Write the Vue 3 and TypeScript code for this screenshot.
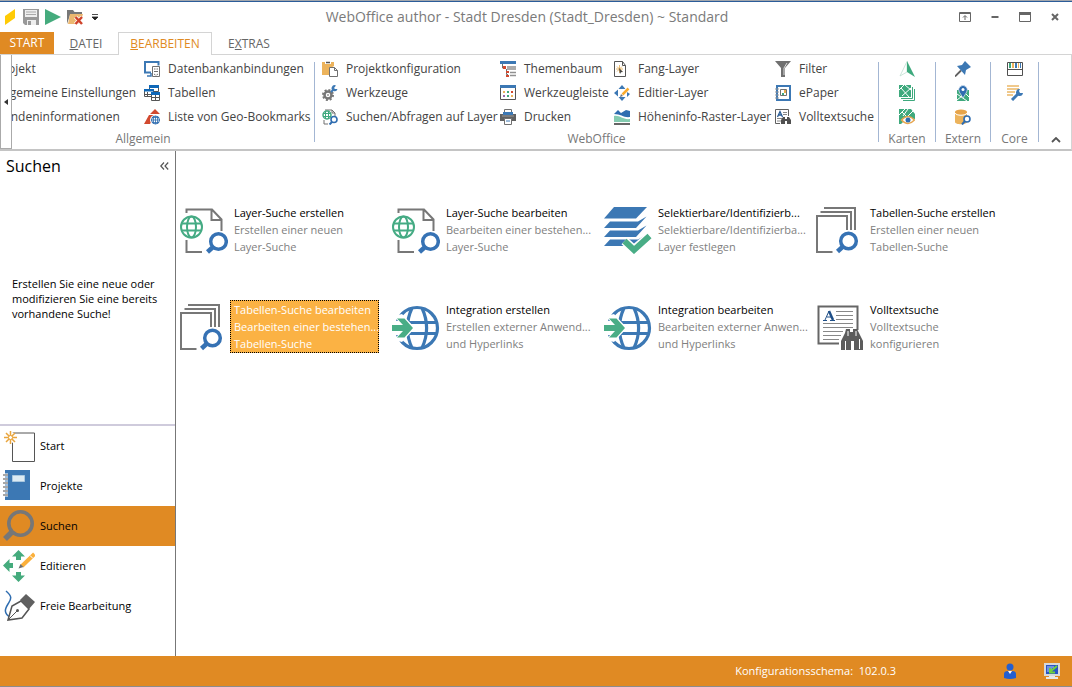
<script setup lang="ts">
import { ref } from 'vue'

interface Command {
  label: string
  icon: string
}
interface RibbonGroup {
  title: string
  kind: string
  commands: Command[]
}
interface Tile {
  title: string
  lines: string[]
  icon: string
}

const groups: RibbonGroup[] = [
  {
    title: 'Allgemein',
    kind: 'general',
    commands: [
      { label: 'Projekt', icon: '' },
      { label: 'Allgemeine Einstellungen', icon: '' },
      { label: 'Kundeninformationen', icon: '' },
      { label: 'Datenbankanbindungen', icon: 'database' },
      { label: 'Tabellen', icon: 'tables' },
      { label: 'Liste von Geo-Bookmarks', icon: 'bookmark' },
    ],
  },
  {
    title: 'WebOffice',
    kind: 'office',
    commands: [
      { label: 'Projektkonfiguration', icon: 'clipboard' },
      { label: 'Werkzeuge', icon: 'tools' },
      { label: 'Suchen/Abfragen auf Layer', icon: 'layersearch' },
      { label: 'Themenbaum', icon: 'tree' },
      { label: 'Werkzeugleiste', icon: 'toolbar' },
      { label: 'Drucken', icon: 'printer' },
      { label: 'Fang-Layer', icon: 'snap' },
      { label: 'Editier-Layer', icon: 'edit' },
      { label: 'Höheninfo-Raster-Layer', icon: 'terrain' },
      { label: 'Filter', icon: 'filter' },
      { label: 'ePaper', icon: 'epaper' },
      { label: 'Volltextsuche', icon: 'fulltext' },
    ],
  },
]

const compactGroups = [
  { title: 'Karten', kind: 'maps', icons: ['north', 'mapstack', 'mapview'] },
  { title: 'Extern', kind: 'extern', icons: ['pin', 'place', 'dbsearch'] },
  { title: 'Core', kind: 'core', icons: ['palette', 'configure'] },
]

const tiles: Tile[] = [
  { title: 'Layer-Suche erstellen', lines: ['Erstellen einer neuen', 'Layer-Suche'], icon: 't-layer' },
  { title: 'Layer-Suche bearbeiten', lines: ['Bearbeiten einer bestehen...', 'Layer-Suche'], icon: 't-layer' },
  { title: 'Selektierbare/Identifizierb...', lines: ['Selektierbare/Identifizierba...', 'Layer festlegen'], icon: 't-select' },
  { title: 'Tabellen-Suche erstellen', lines: ['Erstellen einer neuen', 'Tabellen-Suche'], icon: 't-table' },
  { title: 'Tabellen-Suche bearbeiten', lines: ['Bearbeiten einer bestehen...', 'Tabellen-Suche'], icon: 't-table' },
  { title: 'Integration erstellen', lines: ['Erstellen externer Anwend...', 'und Hyperlinks'], icon: 't-integration' },
  { title: 'Integration bearbeiten', lines: ['Bearbeiten externer Anwen...', 'und Hyperlinks'], icon: 't-integration' },
  { title: 'Volltextsuche', lines: ['Volltextsuche', 'konfigurieren'], icon: 't-fulltext' },
]

const sections = [
  { label: 'Start', icon: 'n-start' },
  { label: 'Projekte', icon: 'n-projects' },
  { label: 'Suchen', icon: 'n-search' },
  { label: 'Editieren', icon: 'n-edit' },
  { label: 'Freie Bearbeitung', icon: 'n-free' },
]

const activeTile = ref(4)
const activeSection = ref(2)
</script>

<template>
  <div class="window">
    <svg class="sprite" aria-hidden="true">
      <symbol id="database" viewBox="0 0 16 16">
        <path d="M7 11.5H1V1h13.500V4.500" fill="none" stroke="#3c78b4" stroke-width="2" /><path d="M3 15h4v-3" fill="none" stroke="#3c78b4" stroke-width="1.500" />
        <path d="M8.500 5.500h7v10h-7z" fill="#fff" stroke="#707070" /><path d="M10 8h1.500M12.500 8H14M10 10.500h4M10 13l1.500 1M12.500 14l1.500-1" stroke="#707070" />
      </symbol>
      <symbol id="tables" viewBox="0 0 16 16">
        <path d="M5.500.5h9v6h-9z" fill="#fff" stroke="#555" /><path d="M5 0h10v3H5z" fill="#0f68b8" />
        <path d="M.5 4.500h9v7h-9z" fill="#fff" stroke="#555" /><path d="M0 4h10v2.500H0z" fill="#0f68b8" /><path d="M3.500 7v5M0 9.500h8" stroke="#555" />
        <path d="M7.500 7.500h8v8h-8z" fill="#fff" stroke="#555" /><path d="M7 7h9v3H7z" fill="#0f68b8" /><path d="M7 12.500h9M11.500 10v6" stroke="#555" />
      </symbol>
      <symbol id="bookmark" viewBox="0 0 16 16">
        <path d="m11 0 5 5H6zM5 6h6l-5 9H0z" fill="#d2492f" /><circle cx="11" cy="11" r="5" fill="#fff" /><circle cx="11.500" cy="11" r="4" fill="#fff" stroke="#2f6db0" /><path d="M7 11h9M8 8.500h7M8 13.500h7M11.500 7v8M9.500 7.500v7M13.500 7.500v7" stroke="#2f6db0" stroke-width=".8" />
      </symbol>
      <symbol id="clipboard" viewBox="0 0 16 16">
        <path d="M0 1h12v4L7 8v6H0z" fill="#ecb35c" /><path d="M3 0h6v3H3z" fill="#fff" /><path d="M4 1.500h4" stroke="#555" stroke-width="1.500" /><path d="M7.500 6.500h5l3 3v6h-8zM12.500 6.500v3h3" fill="#fff" stroke="#707070" />
      </symbol>
      <symbol id="tools" viewBox="0 0 16 16">
        <circle cx="6" cy="10" r="3.500" fill="none" stroke="#777" stroke-width="2.500" /><circle cx="6" cy="10" r="5" fill="none" stroke="#777" stroke-width="2" stroke-dasharray="2 1.900" /><circle cx="6" cy="10" r="1" fill="#999" />
        <path d="m9 7 3-3" stroke="#3c78b4" stroke-width="2" /><path d="M14 .5a3 3 0 1 0 1.500 3.500H13l-1-1z" fill="#3c78b4" />
      </symbol>
      <symbol id="layersearch" viewBox="0 0 16 16">
        <path d="M3 1h7l3 3v3M10 1v3h3M2 11v4h4" fill="none" stroke="#707070" /><circle cx="5" cy="6" r="4" fill="#fff" stroke="#3ea97d" stroke-width="1.500" /><path d="M1 4.500h8M1 7.500h8M3.500 2v8M6.500 2v8" stroke="#3ea97d" />
        <circle cx="12" cy="10.500" r="3" fill="#fff" stroke="#2f6db0" stroke-width="1.600" /><path d="M10 13 7.500 15.500" stroke="#2f6db0" stroke-width="2" />
      </symbol>
      <symbol id="tree" viewBox="0 0 16 16">
        <path d="M0 0h16v3H0z" fill="#3c78b4" /><path d="M2.500 3v4H5M6.500 8v5.500H8" fill="none" stroke="#707070" /><path d="M7 6h9M7 8h9M10 11.500h6M10 14.500h6" stroke="#909090" stroke-width="1.500" /><path d="M3 5h3v3H3zM6 10h3v2H6zM6 14h3v2H6z" fill="#d2492f" />
      </symbol>
      <symbol id="toolbar" viewBox="0 0 16 16">
        <path d="M.5.5h15v14H.5z" fill="#fff" stroke="#555" /><path d="M0 0h16v3H0z" fill="#3c78b4" /><path d="M3 6h2v2H3zM11 10h2v2h-2z" fill="#ecb35c" /><path d="M7 6h2v2H7zM7 10h2v2H7z" fill="#3ea97d" /><path d="M11 6h2v2h-2z" fill="#d2492f" /><path d="M3 10h2v2H3z" fill="#9968a8" />
      </symbol>
      <symbol id="printer" viewBox="0 0 16 16">
        <path d="M4.500.5h7v4h-7z" fill="#fff" stroke="#707070" /><path d="M0 5h16v7H0z" fill="#606060" /><path d="M3 3h10v3H3z" fill="#3c78b4" /><path d="M2 7h12" stroke="#999" /><path d="M4.500 9.500h7v6h-7z" fill="#fff" stroke="#707070" /><path d="M6 12h4" stroke="#3c78b4" />
      </symbol>
      <symbol id="snap" viewBox="0 0 16 16">
        <path d="M.5.5h8l3 4v11H.5zM8.500.5v4h3" fill="#fff" stroke="#555" /><path d="M5.500 4v8M2 8h7M3 5.500l5 5M3 10.500l5-5" stroke="#e6ab4e" stroke-width=".8" /><path d="m5 7 4 4-2 .2L6 13z" fill="#444" />
      </symbol>
      <symbol id="edit" viewBox="0 0 16 16">
        <path d="m8 0 3.500 4h-7zM8 16l3.500-4h-7zM0 8l4-3.500v7zM16 9l-3 3v-5z" fill="#3c78b4" /><path d="M8 10 14 3.500" stroke="#fff" stroke-width="4" /><path d="m8.500 9.500 6-6" stroke="#f9ab2e" stroke-width="2.500" /><path d="m6 12 1-3 2 2z" fill="#707070" />
      </symbol>
      <symbol id="terrain" viewBox="0 0 16 16">
        <path d="M0 5 4 1l3 3 5-3 4 1v6c-6 1-9-3-16-3z" fill="#2f6db0" /><path d="M0 7c6-1 9 4 16 3v3H0z" fill="#84cbb0" /><path d="M0 14h16v2H0z" fill="#666" />
      </symbol>
      <symbol id="filter" viewBox="0 0 16 16">
        <path d="M0 0h16l-6 7v9H6V7z" fill="#707070" /><path d="m12 2-3 5v7" fill="none" stroke="#ddd" />
      </symbol>
      <symbol id="epaper" viewBox="0 0 16 16">
        <path d="M2 1h13v14H2z" fill="#fff" stroke="#3c78b4" stroke-width="2" /><path d="M5.500 4.500h6v6h-6z" fill="#fff" stroke="#707070" /><path d="M7 8h2v2H7z" fill="#3ea97d" /><path d="M9 5h2v3H9z" fill="#e6ab4e" /><path d="M0 4h4M0 7h4M0 10h4M0 13h4" stroke="#999" />
      </symbol>
      <symbol id="fulltext" viewBox="0 0 16 16">
        <path d="M5 14.500H.5V.5h13V7" fill="none" stroke="#606060" /><path d="M2.500 8 5 2.500 7.500 8M3.500 6h3" fill="none" stroke="#285b95" stroke-width="1.300" /><path d="M8 3.500h4M8 5.500h4M2 9.500h5M2 12h4" stroke="#888" /><path d="M6 15v-4l2-3h2v2h2V8h2l2 3v4h-4v-3h-2v3z" fill="#505050" />
      </symbol>
      <symbol id="north" viewBox="0 0 16 16">
        <path d="M8 .5 1 15l7-4z" fill="#fff" stroke="#bfe0d2" stroke-width=".8" /><path d="M8 0v11l8 5z" fill="#3ea97d" />
      </symbol>
      <symbol id="mapstack" viewBox="0 0 16 16">
        <path d="M0 0h12v12H0z" fill="#3ea97d" /><path d="m0 5 5-5M2 3l8 9M12 3l-9 8M6 0l6 5" stroke="#fff" /><path d="M13.500 2v11.500H2M15.500 4v11.500H4" fill="none" stroke="#3ea97d" />
      </symbol>
      <symbol id="mapview" viewBox="0 0 16 16">
        <path d="M0 0h12l4 5v5L8 9l-6 6H0z" fill="#3ea97d" /><path d="m0 6 6-6M3 3l5 5M9 0l-5 7M14 2 9 7" stroke="#fff" /><path d="M2.500 11Q9 4 15.500 11 9 18 2.500 11z" fill="#fff" stroke="#e6a650" stroke-width="1.500" /><circle cx="9" cy="11" r="2.500" fill="#2f6db0" />
      </symbol>
      <symbol id="pin" viewBox="0 0 16 16">
        <path d="m0 15.500 6-6" stroke="#606060" stroke-width="1.800" /><path d="m2 5 5-1 3-4 6 6-5 3-1 5z" fill="#3c78b4" />
      </symbol>
      <symbol id="place" viewBox="0 0 16 16">
        <path d="M2 5h12v11H2z" fill="#3ea97d" /><path d="m2 9 10 7M2 15l5-4M11 9l3 3" stroke="#fff" /><path d="M8 13 4.300 7a4.300 4.300 0 1 1 7.400 0z" fill="#2f6db0" stroke="#fff" stroke-width=".6" /><circle cx="8" cy="4.500" r="1.500" fill="#fff" />
      </symbol>
      <symbol id="dbsearch" viewBox="0 0 16 16">
        <path d="M0 3v10c0 3 12 3 12 0V3z" fill="#ecb35c" /><ellipse cx="6" cy="3" rx="6" ry="2.500" fill="#e6a44a" /><path d="M0 4c1 3 11 3 12 0" fill="none" stroke="#fff" /><circle cx="12" cy="10" r="3" fill="#fff" stroke="#2f6db0" stroke-width="1.600" /><path d="m10 12-3 3.500" stroke="#2f6db0" stroke-width="2" />
      </symbol>
      <symbol id="palette" viewBox="0 0 16 16">
        <path d="M.5 1.500h15v13H.5z" fill="#fff" stroke="#505050" /><path d="M0 8.500h16" stroke="#505050" /><path d="M2 2h2v5H2z" fill="#3ea97d" /><path d="M5 2h2v5H5zM11 2h1v5h-1z" fill="#ecb35c" /><path d="M8 2h2v5H8zM13 2h1v5h-1z" fill="#3c78b4" />
      </symbol>
      <symbol id="configure" viewBox="0 0 16 16">
        <path d="M0 1h12M0 4h12M0 7h8M0 10h6" stroke="#f0c98c" stroke-width="1.800" /><path d="m5 15 7-7" stroke="#3c78b4" stroke-width="3" /><path d="M13 4a3.500 3.500 0 1 0 3 4h-3l-1-2z" fill="#3c78b4" />
      </symbol>

      <symbol id="t-layer" viewBox="0 0 48 48">
        <path d="M6.500 7V3.500H32l9.500 10V25M31.500 3.500V14h10M6.500 34v12H22" fill="none" stroke="#777" stroke-width="2" />
        <g fill="none" stroke="#45ab84" stroke-width="2"><circle cx="11.500" cy="21" r="10.500" /><ellipse cx="11.500" cy="21" rx="4.500" ry="10.500" /><path d="M2 17.500h19M2 24.500h19" /></g>
        <circle cx="38.500" cy="35.500" r="7.800" fill="#fff" stroke="#3672b4" stroke-width="3.500" /><path d="m33 41-5.500 5" stroke="#3672b4" stroke-width="4.500" />
      </symbol>
      <symbol id="t-table" viewBox="0 0 48 48">
        <path d="M8 2h31v22M4.500 6H35v18M16.500 46H1V10h30v14" fill="none" stroke="#777" stroke-width="2" />
        <circle cx="32.500" cy="35" r="7.800" fill="#fff" stroke="#3672b4" stroke-width="3.500" /><path d="m27 40.500-5.500 5" stroke="#3672b4" stroke-width="4.500" />
      </symbol>
      <symbol id="t-select" viewBox="0 0 48 48">
        <g fill="#3c78b4"><path d="M10 1h33L32 12.500H0z" /><path d="m0 22 6-6.500h28l8.500-5L32 22z" /><path d="m0 31 6-6.500h28l8.500-5L32 31z" /><path d="m0 40 6-6.500h28l8.500-5L32 40z" /></g>
        <path d="m20.500 35 9.500 8.500L46 30" fill="none" stroke="#fff" stroke-width="9" /><path d="m20.500 35 9.500 9L45.500 30" fill="none" stroke="#49ad86" stroke-width="6" />
      </symbol>
      <symbol id="t-integration" viewBox="0 0 48 48">
        <g fill="none" stroke="#3c78b4" stroke-width="3.200"><circle cx="25" cy="25" r="20.500" /><path d="M20 5c-6 13-6 27 0 40M30 5c6 13 6 27 0 40M8 19.500h36M8 30.500h36" /></g>
        <path d="M0 18h6l-4-5 8-2 13 14-13 14-8-2 4-5H0z" fill="#fff" /><path d="M0 22h11l-6-6.500h7.500L21 25l-8.500 9.500H5L11 28H0z" fill="#49ad86" />
      </symbol>
      <symbol id="t-fulltext" viewBox="0 0 48 48">
        <path d="M23 40.500H2.500V3.500h39V27" fill="none" stroke="#666" stroke-width="2" /><path d="m9 17 4-9M11 14h5M7 17.500h4M14 17.500h5" fill="none" stroke="#1f4f88" /><path d="m13 8 4 9" stroke="#1f4f88" stroke-width="2.500" />
        <path d="M20 8.500h17M20 12.500h17M20 16.500h17M7 20.500h30M7 24.500h30M7 28.500h20M7 32.500h18M7 36.500h16" stroke="#888" />
        <path d="M25 47v-9l4-8 1-4h4v3h3v-3h4l2 4 4 8v9h-9v-9h-3v9z" fill="#5c5c5c" /><path d="M29.500 38v9M43.500 36v10M32 28v5M40 28v5" stroke="#fff" />
      </symbol>

      <symbol id="n-start" viewBox="0 0 32 32">
        <path d="M9.500 3h22v28.500h-22z" fill="#fff" stroke="#555" /><circle cx="7.500" cy="7.500" r="5.500" fill="#fff" /><path d="M7.500 1v13M1 7.500h13M3 3l9 9M12 3l-9 9" stroke="#e9a53d" stroke-width="1.500" /><circle cx="7.500" cy="7.500" r="2" fill="#fff" stroke="#e9a53d" />
      </symbol>
      <symbol id="n-projects" viewBox="0 0 32 32">
        <path d="M2 0h25v30H2z" fill="#3c78b4" /><path d="M9.500 5.500h12v6h-12z" fill="#dceaf3" stroke="#aac8df" /><path d="M0 5h5M0 9h5M0 13h5M0 17h5M0 21h5M0 25h5" stroke="#fff" stroke-width="3" /><path d="M0 5h5M0 9h5M0 13h5M0 17h5M0 21h5M0 25h5" stroke="#8a8a8a" stroke-width="1.500" />
      </symbol>
      <symbol id="n-search" viewBox="0 0 32 32">
        <circle cx="17.500" cy="13.500" r="11.700" fill="none" stroke="#777" stroke-width="3.600" /><path d="M9 22 2 29" stroke="#777" stroke-width="5.500" />
      </symbol>
      <symbol id="n-edit" viewBox="0 0 32 32">
        <path d="m15.500 0 6.500 6.500h-4V10h-5V6.500H9zM15.500 32l6.500-6.500h-4V22h-5v3.500H9zM0 15.500 6.500 9v4H10v5H6.500v4z" fill="#45ab7d" /><path d="M19 16 31.500 4" stroke="#fbb03b" stroke-width="4" /><path d="m27 5.500 3 3" stroke="#fff" /><path d="m15.500 18.500 2-4.500 3 3z" fill="#707070" />
      </symbol>
      <symbol id="n-free" viewBox="0 0 32 32">
        <path d="M3 1c7 6 5 8 2 13s-5 9 3 14" fill="none" stroke="#2f6db0" stroke-width="1.500" /><path d="m5 30 4-14 9-5 8 8-7 9z" fill="#fff" stroke="#555" stroke-width="1.500" /><path d="m17 10 6-6 9 8-6 7z" fill="#606060" /><path d="m5 30 9-9" stroke="#555" /><circle cx="14.500" cy="20.500" r="1.500" fill="#555" />
      </symbol>
    </svg>

    <header class="titlebar">
      <div class="quick">
        <svg class="brand" viewBox="0 0 12 16"><path d="M0 7 10 0v9L0 16z" fill="#ffcb05" /></svg>
        <button type="button" aria-label="Speichern">
          <svg viewBox="0 0 16 16"><path d="M0 0h16v16H2l-2-2z" fill="#999" /><path d="M2 1h12v7H2z" fill="#eee" /><path d="M3 3h10M3 5.500h10" stroke="#aaa" /><path d="M4 11h9v5H4z" fill="#eee" /><path d="M5 12h3v4H5z" fill="#999" /></svg>
        </button>
        <button type="button" aria-label="Starten">
          <svg viewBox="0 0 16 16"><path d="m0 0 16 8-16 8z" fill="#45ab7d" /></svg>
        </button>
        <button type="button" aria-label="Projekt schließen">
          <svg viewBox="0 0 16 16"><path d="M0 15V1h6l1.500 2H15v3H3z" fill="#777" /><path d="M3 5h13l-3 10H1z" fill="#ecb870" /><path d="m8.500 8 6.500 7M15 8l-6.500 7" stroke="#fff" stroke-width="4" /><path d="m8.500 8 6.500 7M15 8l-6.500 7" stroke="#cf432b" stroke-width="2.500" /></svg>
        </button>
        <button type="button" class="more" aria-label="Schnellzugriff anpassen">
          <svg viewBox="0 0 6 8"><path d="M0 1.500h6M0 4h6L3 7z" fill="#222" stroke="#222" stroke-width=".8" /></svg>
        </button>
      </div>
      <h1>WebOffice author - Stadt Dresden (Stadt_Dresden) ~ Standard</h1>
      <div class="controls">
        <button type="button" aria-label="Menüband"><svg viewBox="0 0 12 10"><path d="M.5.5h11v9H.5zM0 1.500h12M6 8V4M4 5.500l2-2 2 2" fill="none" stroke="#666" /></svg></button>
        <button type="button" aria-label="Minimieren"><svg viewBox="0 0 12 10"><path d="M2.500 5h7" stroke="#666" stroke-width="2" /></svg></button>
        <button type="button" aria-label="Maximieren"><svg viewBox="0 0 12 10"><path d="M.5.5h11v9H.5z" fill="none" stroke="#666" /><path d="M0 0h12v3H0z" fill="#666" /></svg></button>
        <button type="button" aria-label="Schließen"><svg viewBox="0 0 12 10"><path d="m3 2 6 6M9 2 3 8" stroke="#666" stroke-width="2" /></svg></button>
      </div>
    </header>

    <nav class="tabs">
      <button type="button" class="tab start">START</button>
      <button type="button" class="tab file"><u>D</u>ATEI</button>
      <button type="button" class="tab current"><u>B</u>EARBEITEN</button>
      <button type="button" class="tab extras">E<u>X</u>TRAS</button>
    </nav>

    <section class="ribbon">
      <button type="button" class="scroller" aria-label="Nach links"><svg viewBox="0 0 4 6"><path d="M4 0v6L0 3z" fill="#333" /></svg></button>
      <div class="groups">
        <div v-for="g in groups" :key="g.title" class="group" :class="g.kind">
          <div class="commands">
            <button v-for="c in g.commands" :key="c.label" type="button" class="command">
              <svg><use v-if="c.icon" :href="'#' + c.icon" /></svg>
              <span>{{ c.label }}</span>
            </button>
          </div>
          <div class="caption">{{ g.title }}</div>
        </div>
        <div v-for="g in compactGroups" :key="g.title" class="group compact" :class="g.kind">
          <div class="commands">
            <button v-for="i in g.icons" :key="i" type="button" class="command" :aria-label="g.title + ' ' + i">
              <svg><use :href="'#' + i" /></svg>
            </button>
          </div>
          <div class="caption">{{ g.title }}</div>
        </div>
      </div>
      <button type="button" class="collapse" aria-label="Menüband reduzieren"><svg viewBox="0 0 10 6"><path d="m1 5 4-4 4 4" fill="none" stroke="#555" stroke-width="1.800" /></svg></button>
    </section>

    <div class="body">
      <aside class="sidebar">
        <div class="heading">
          <h2>Suchen</h2>
          <button type="button" aria-label="Bereich einklappen"><svg viewBox="0 0 9 8"><path d="M4 .5.8 4 4 7.500M8.200.5 5 4l3.200 3.500" fill="none" stroke="#555" stroke-width="1.200" /></svg></button>
        </div>
        <p class="hint">Erstellen Sie eine neue oder modifizieren Sie eine bereits vorhandene Suche!</p>
        <div class="sections">
          <button
            v-for="(s, i) in sections"
            :key="s.label"
            type="button"
            class="section"
            :class="{ active: activeSection === i }"
            @click="activeSection = i"
          >
            <svg><use :href="'#' + s.icon" /></svg>
            <span>{{ s.label }}</span>
          </button>
        </div>
      </aside>

      <main class="tiles">
        <button
          v-for="(t, i) in tiles"
          :key="t.title"
          type="button"
          class="tile"
          :class="{ selected: activeTile === i }"
          @click="activeTile = i"
        >
          <svg><use :href="'#' + t.icon" /></svg>
          <span class="text">
            <span class="name">{{ t.title }}</span>
            <span v-for="l in t.lines" :key="l" class="line">{{ l }}</span>
          </span>
        </button>
      </main>
    </div>

    <footer class="status">
      <span class="schema">Konfigurationsschema:&nbsp; 102.0.3</span>
      <svg class="user" viewBox="0 0 16 16"><circle cx="8" cy="4" r="3.500" fill="#245fd0" /><path d="M2 15v-4q0-3 4-3l2 2 2-2q4 0 4 3v4q-6 2-12 0z" fill="#245fd0" /><path d="m6 8 2 3 2-3z" fill="#fff" /></svg>
      <svg class="screen" viewBox="0 0 16 16"><path d="M0 0h16v13H0z" fill="#d8d8d8" /><path d="M2 2h12v9H2z" fill="#2853c5" /><path d="M3 4h7M3 6h5M3 8h3" stroke="#b9d0f5" /><path d="m13 3-6 5M6 5v4.500h5" fill="none" stroke="#6fd23c" stroke-width="2" /><path d="M5 13h6v1h3v2H2v-2h3z" fill="#e8e8e8" /></svg>
    </footer>
  </div>
</template>

<style>
body {
  margin: 0;
}
</style>

<style scoped>
.window {
  display: flex;
  flex-direction: column;
  box-sizing: border-box;
  min-height: 100vh;
  border-top: 1px solid #a3a7ad;
  border-bottom: 1px solid #8c8c8c;
  background: #fff;
  color: #444;
  font: 12px/16px "Open Sans", "Noto Sans", sans-serif;
}
.sprite {
  position: absolute;
  width: 0;
  height: 0;
}
button {
  margin: 0;
  padding: 0;
  border: 0;
  background: none;
  color: inherit;
  font: inherit;
  text-align: left;
  cursor: default;
}
svg {
  display: block;
  flex: none;
}
.titlebar {
  display: flex;
  align-items: center;
  height: 30px;
  border-top: 1px solid #2b5c99;
}
.quick {
  display: flex;
  align-items: center;
  gap: 6px;
  width: 100px;
  padding-left: 5px;
}
.quick svg {
  width: 16px;
  height: 16px;
}
.quick .brand {
  width: 12px;
}
.quick .more {
  margin-left: 3px;
}
.quick .more svg {
  width: 6px;
  height: 8px;
}
h1 {
  flex: 1;
  margin: 0;
  padding-right: 10px;
  color: #7a7a7a;
  font-size: 14px;
  font-weight: 400;
  line-height: 20px;
  text-align: center;
  white-space: nowrap;
}
.controls {
  display: flex;
  gap: 18px;
  padding-right: 11px;
}
.controls svg {
  width: 12px;
  height: 10px;
}
.tabs {
  display: flex;
  align-items: stretch;
  height: 22px;
  border-bottom: 1px solid #d4d4d4;
}
.tab {
  padding-top: 2px;
  color: #666;
  text-align: center;
}
.start {
  width: 54px;
  padding-top: 0;
  background: #e08a23;
  color: #fff;
}
.file {
  width: 64px;
}
.current {
  width: 94px;
  box-sizing: border-box;
  margin-bottom: -1px;
  padding-top: 0;
  border: 1px solid #d4d4d4;
  border-bottom: 0;
  background: #fff;
  color: #e08a23;
}
.extras {
  width: 74px;
}
.ribbon {
  display: flex;
  height: 94px;
  border-right: 1px solid #d4d4d4;
  border-bottom: 2px solid #c4c4c4;
}
.scroller {
  display: flex;
  align-items: center;
  justify-content: center;
  box-sizing: border-box;
  width: 12px;
  border: 1px solid #aaa;
  border-top: 0;
}
.scroller svg {
  width: 4px;
  height: 6px;
}
.groups {
  display: flex;
  flex: 1;
  min-width: 0;
  overflow: hidden;
}
.group {
  flex: none;
  box-sizing: border-box;
  margin: 7px 0;
  padding-left: 7px;
  border-right: 1px solid #a3b6d3;
}
.commands {
  display: grid;
  grid-template-rows: repeat(3, 24px);
  grid-auto-flow: column;
  margin-top: -5px;
}
.general {
  width: 345px;
  margin-left: -42px;
  padding-left: 2px;
}
.general .commands {
  grid-template-columns: 172px 170px;
}
.office {
  width: 564px;
}
.office .commands {
  grid-template-columns: 178px 114px 161px 103px;
}
.maps {
  width: 57px;
  padding-left: 20px;
}
.extern {
  width: 55px;
  padding-left: 19px;
}
.core {
  width: 48px;
  padding-left: 16px;
}
.command {
  display: flex;
  align-items: center;
  gap: 8px;
  white-space: nowrap;
}
.command svg {
  width: 16px;
  height: 16px;
}
.caption {
  display: flex;
  justify-content: center;
  margin-top: 2px;
  color: #777;
}
.office .caption {
  margin-left: -7px;
}
.maps .caption {
  margin-left: -20px;
}
.extern .caption {
  margin-left: -19px;
}
.core .caption {
  margin-left: -16px;
}
.collapse {
  align-self: flex-end;
  padding: 0 10px 6px 0;
}
.collapse svg {
  width: 10px;
  height: 6px;
}
.body {
  display: flex;
  flex: 1;
}
.sidebar {
  display: flex;
  flex-direction: column;
  box-sizing: border-box;
  width: 176px;
  border-right: 1px solid #777;
  color: #000;
  font-size: 11px;
}
.heading {
  display: flex;
  align-items: center;
  justify-content: space-between;
  height: 30px;
  padding: 0 6px;
}
h2 {
  margin: 0;
  font-size: 16px;
  font-weight: 400;
}
.heading svg {
  width: 9px;
  height: 8px;
}
.hint {
  margin: auto 12px;
  padding-bottom: 8px;
  line-height: 15px;
}
.sections {
  padding-bottom: 30px;
  border-top: 2px solid #cfcbdc;
}
.section {
  display: flex;
  align-items: center;
  gap: 5px;
  width: 100%;
  height: 40px;
  padding-left: 3px;
}
.section svg {
  width: 32px;
  height: 32px;
}
.section.active {
  background: #e08a23;
}
.tiles {
  display: grid;
  flex: 1;
  grid-template-columns: repeat(auto-fill, 212px);
  grid-auto-rows: 53px;
  row-gap: 44px;
  padding: 52px 0 0 4px;
  font-size: 11px;
}
.tile {
  display: flex;
  align-items: center;
  gap: 2px;
}
.tile svg {
  width: 48px;
  height: 48px;
}
.text {
  box-sizing: border-box;
  width: 149px;
  height: 53px;
  padding: 0 3px;
  border: 1px solid transparent;
  color: #808080;
  line-height: 17px;
  white-space: nowrap;
}
.name,
.line {
  display: block;
}
.name {
  color: #000;
}
.selected .text {
  border: 1px dotted #000;
  background: #fbb244;
  color: #fff;
}
.selected .name {
  color: #fff;
}
.status {
  display: flex;
  align-items: center;
  height: 30px;
  background: #e08a23;
  color: #fff;
  font-size: 11px;
}
.schema {
  margin-left: auto;
  margin-right: 106px;
}
.status svg {
  width: 16px;
  height: 16px;
}
.user {
  margin-right: 26px;
}
.screen {
  margin-right: 12px;
}
</style>
